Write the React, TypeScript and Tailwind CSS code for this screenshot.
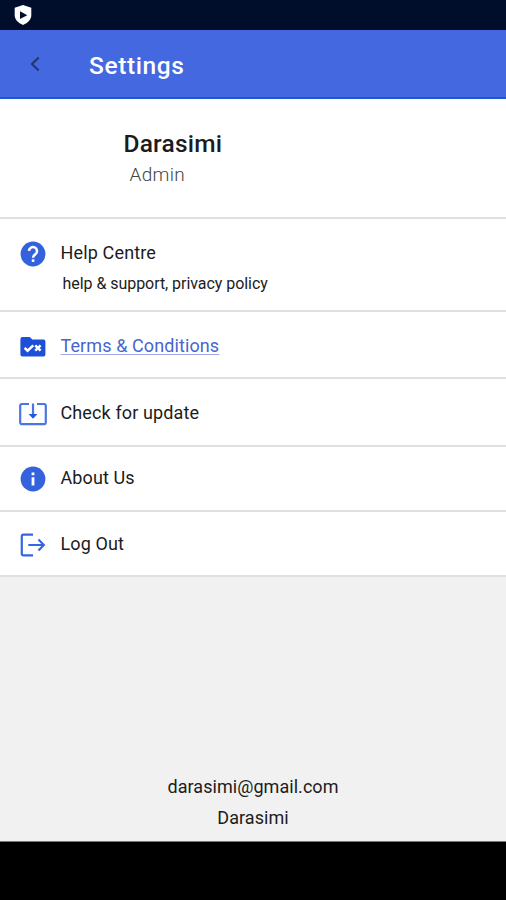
import type { ReactNode } from "react";

type RowProps = {
  icon: ReactNode;
  className: string;
  children: ReactNode;
};

const HelpIcon = () => (
  <svg width="26" height="26" viewBox="0 0 26 26">
    <circle cx="13" cy="13" r="12.4" fill="#3461dc" />
    <path d="M9 10.1a4 4 0 1 1 6.6 3c-1.5 1.1-2.5 1.7-2.5 3.6" fill="none" stroke="#fff" strokeWidth="2.5" />
    <rect x="11.8" y="18.3" width="2.6" height="2.6" fill="#fff" />
  </svg>
);

const FolderIcon = () => (
  <svg width="26" height="26" viewBox="0 0 26 26">
    <path d="M2.4 3h7.4l2.6 2.6h11a2 2 0 0 1 2 2v13a2 2 0 0 1-2 2h-21a2 2 0 0 1-2-2V5a2 2 0 0 1 2-2z" fill="#1d50d6" />
    <path d="M4.6 13.8l3 2.9 5.7-5.3M15.2 11.3l5.4 5.4M20.6 11.3l-5.4 5.4" fill="none" stroke="#fff" strokeWidth="2.5" />
  </svg>
);

const UpdateIcon = () => (
  <svg width="28" height="26" viewBox="0 0 28 26">
    <path
      d="M10 3H3a1.8 1.8 0 0 0-1.8 1.8v16.6A1.8 1.8 0 0 0 3 23.2h22a1.8 1.8 0 0 0 1.8-1.8V4.8A1.8 1.8 0 0 0 25 3h-7"
      fill="none"
      stroke="#4a76e4"
      strokeWidth="2.2"
    />
    <path d="M14 2.5v12" fill="none" stroke="#4a76e4" strokeWidth="2.2" />
    <path d="M9.6 13h8.8L14 17.7z" fill="#2458dc" />
  </svg>
);

const InfoIcon = () => (
  <svg width="26" height="26" viewBox="0 0 26 26">
    <circle cx="13" cy="13" r="12.4" fill="#3461dc" />
    <path d="M11.6 6.6h2.8v2.7h-2.8zM11.6 11.2h2.8v8.2h-2.8z" fill="#fff" />
  </svg>
);

const LogoutIcon = () => (
  <svg width="26" height="26" viewBox="0 0 26 26" fill="none" stroke="#3565e2" strokeWidth="2.2">
    <path d="M13 2.6H3.4a1.6 1.6 0 0 0-1.6 1.6v17.6a1.6 1.6 0 0 0 1.6 1.6H13" />
    <path d="M8.3 13h15.5M18.5 7.6l5.3 5.4-5.3 5.4" />
  </svg>
);

const Row = ({ icon, className, children }: RowProps) => (
  <div className={`flex shrink-0 border-b-2 border-[#e0e0e0] bg-white ${className}`}>
    <div className="flex h-[26px] w-[60.5px] shrink-0 justify-center pl-[6px]">{icon}</div>
    {children}
  </div>
);

const App = () => {
  return (
    <div className="flex h-[900px] w-[506px] flex-col overflow-hidden bg-[#f1f1f1] font-['Roboto',sans-serif] text-[18px] leading-[24px] text-[#1c1c1c]">
      {/* Status bar */}
      <div className="h-[30px] shrink-0 bg-[#000d2b] pt-[5px] pl-[14px]">
        <svg width="18" height="20" viewBox="0 0 18 20">
          <path d="M9 0l8.3 2.7v7.6c0 4.2-3.3 7.6-8.3 9.7-5-2.1-8.3-5.5-8.3-9.7V2.7z" fill="#fff" />
          <path d="M6 6.3l7.3 3.9L6 14z" fill="#000d2b" />
        </svg>
      </div>

      {/* Header */}
      <header className="flex h-[69px] shrink-0 items-center border-b-2 border-[#1f58d4] bg-[#4368e0] pt-1 pl-[30px]">
        <svg width="10" height="16" viewBox="0 0 10 16" className="-mt-1">
          <path d="M8.7 1.5L2 8l6.7 6.5" fill="none" stroke="#25366f" strokeWidth="2.1" />
        </svg>
        <h1 className="ml-[49px] text-[24.5px] font-medium tracking-[0.6px] text-white">Settings</h1>
      </header>

      {/* Profile */}
      <div className="h-[119.5px] shrink-0 border-b-2 border-[#e0e0e0] bg-white pt-[33px] pl-[123.5px]">
        <h2 className="text-[24.5px] font-medium tracking-[0.2px]">Darasimi</h2>
        <p className="mt-[7px] ml-[6px] text-[19px] font-light tracking-[0.3px] text-[#444]">Admin</p>
      </div>

      <Row icon={<HelpIcon />} className="h-[93px] pt-[22px]">
        <div>
          <p className="tracking-[0.15px]">Help Centre</p>
          <p className="mt-[7px] ml-[2px] text-[16px] tracking-[-0.05px]">help &amp; support, privacy policy</p>
        </div>
      </Row>
      <Row icon={<FolderIcon />} className="h-[67px] pt-[22px]">
        <a
          href="#"
          className="tracking-[0.1px] text-[#4766cd] underline decoration-[#9eabe6] decoration-1 underline-offset-2"
        >
          Terms &amp; Conditions
        </a>
      </Row>
      <Row icon={<UpdateIcon />} className="h-[68px] pt-[22.5px]">
        <p className="tracking-[0.12px]">Check for update</p>
      </Row>
      <Row icon={<InfoIcon />} className="h-[65px] pt-[19.5px]">
        <p className="tracking-[0.1px]">About Us</p>
      </Row>
      <Row icon={<LogoutIcon />} className="h-[65.5px] pt-[20px]">
        <p className="tracking-[0.1px]">Log Out</p>
      </Row>

      {/* Account */}
      <div className="mt-auto shrink-0 pb-[11px] text-center">
        <p className="tracking-[0.05px]">darasimi@gmail.com</p>
        <p className="mt-[7px] tracking-[0.05px]">Darasimi</p>
      </div>
      <div className="h-[59px] shrink-0 border-t border-[#777] bg-black" />
    </div>
  );
};

export default App;
